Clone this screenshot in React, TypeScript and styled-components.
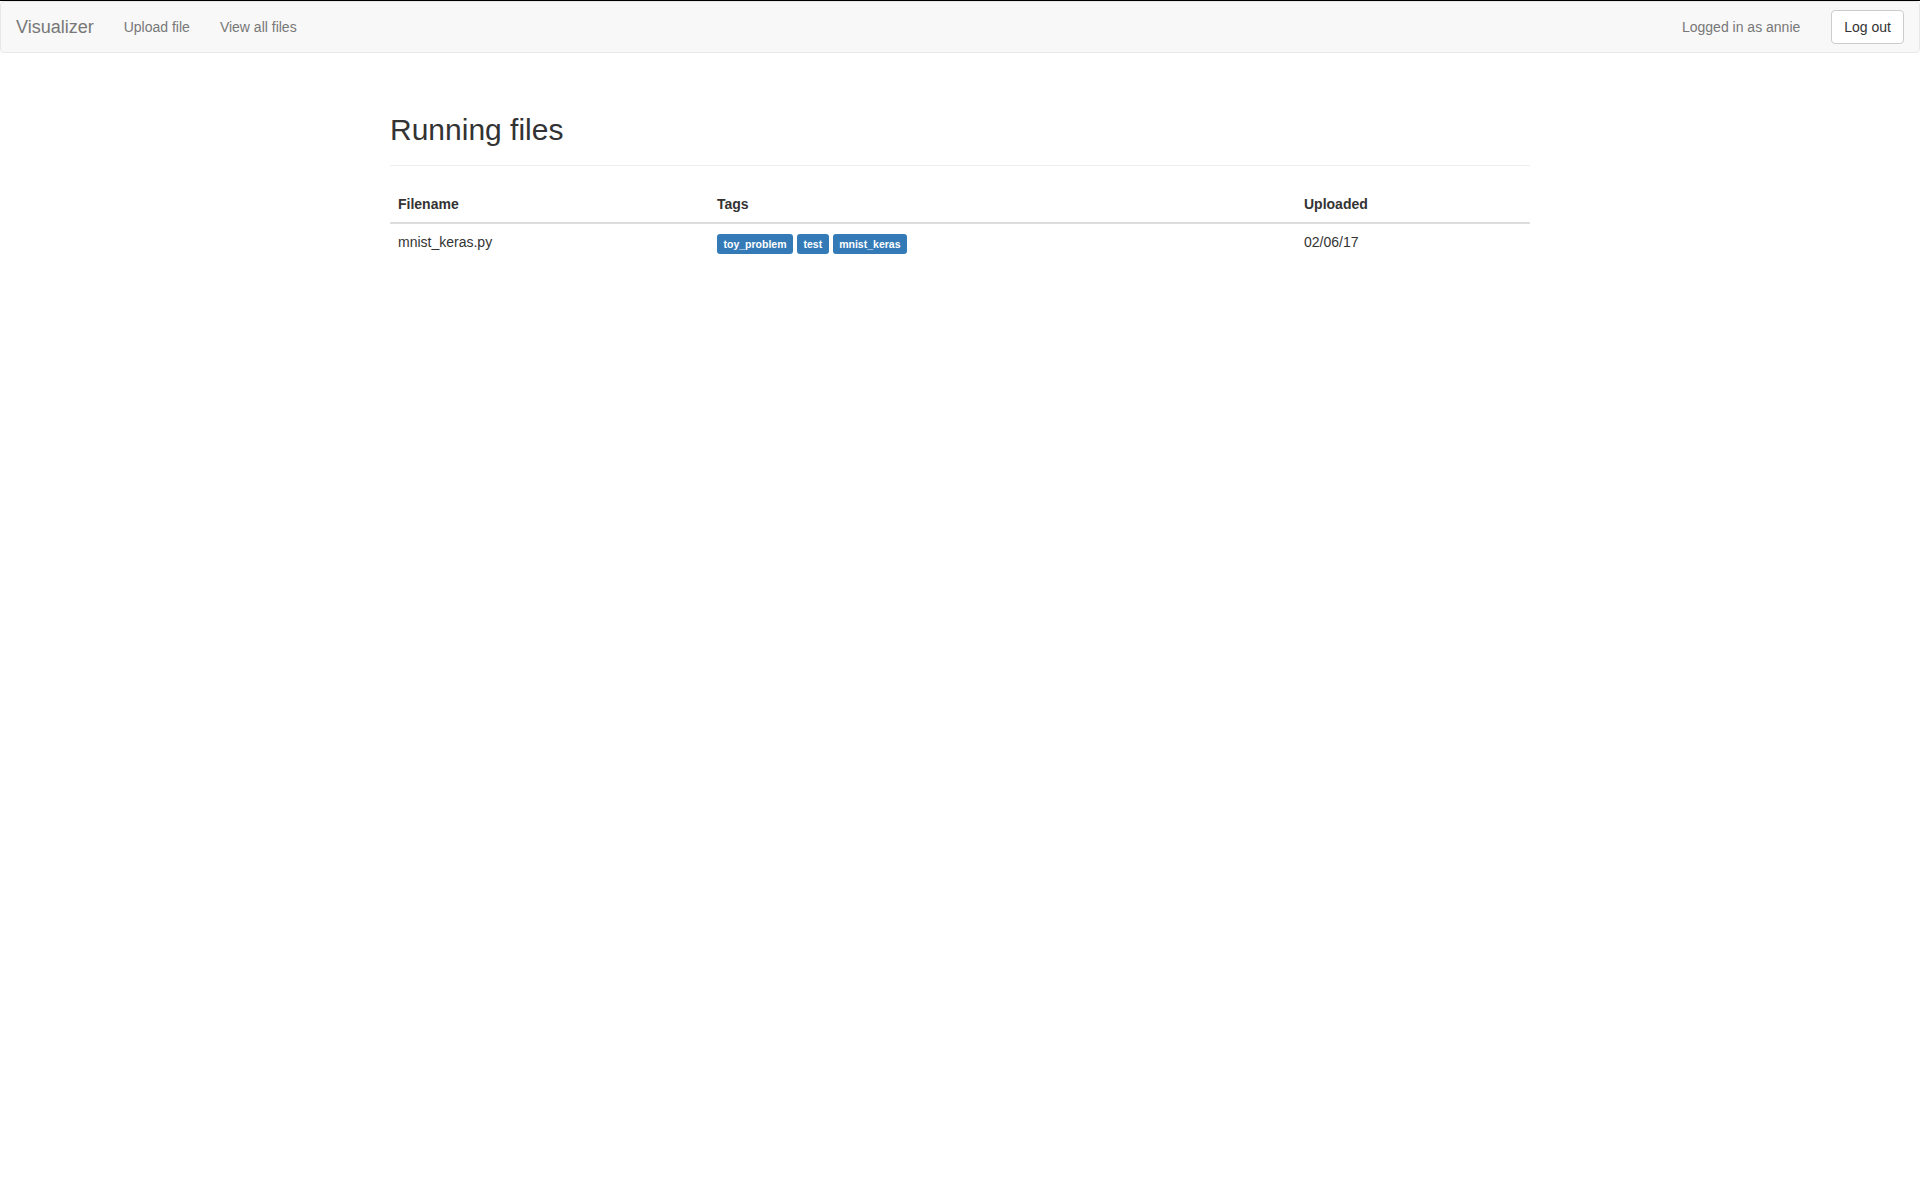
import React from 'react'
import styled, { createGlobalStyle } from 'styled-components'

const GlobalStyle = createGlobalStyle`
  html, body {
    margin: 0;
  }
  body {
    font-family: "Liberation Sans", Helvetica, Arial, sans-serif;
    font-size: 14px;
    line-height: 1.42857143;
    color: #333;
    background: #fff;
    border-top: 1px solid #000;
  }
  * {
    box-sizing: border-box;
  }
`

const Navbar = styled('nav')`
  display: flex;
  justify-content: space-between;
  align-items: flex-start;
  min-height: 52px;
  padding: 0 15px;
  margin-bottom: 20px;
  background-color: #f8f8f8;
  border: 1px solid #e7e7e7;
  border-radius: 4px;
`

const NavGroup = styled('div')`
  display: flex;
  align-items: flex-start;
`

const Brand = styled('a')`
  margin-left: -15px;
  padding: 15px;
  height: 50px;
  font-size: 18px;
  line-height: 20px;
  color: #777;
  text-decoration: none;
`

const NavLink = styled('a')`
  display: block;
  padding: 15px;
  line-height: 20px;
  color: #777;
  text-decoration: none;
`

const NavText = styled('p')`
  margin: 15px 31px 15px 0;
  line-height: 20px;
  color: #777;
`

const LogoutButton = styled('button')`
  margin: 8px 0;
  padding: 6px 12px;
  font-family: inherit;
  font-size: 14px;
  line-height: 20px;
  color: #333;
  background-color: #fff;
  border: 1px solid #ccc;
  border-radius: 4px;
  cursor: pointer;
`

const Container = styled('div')`
  width: 1170px;
  margin: 0 auto;
  padding: 0 15px;
`

const PageHeader = styled('div')`
  margin: 60px 0 20px;
  padding-bottom: 9px;
  border-bottom: 1px solid #eee;
`

const Title = styled('h2')`
  margin: 0 0 10px;
  font-size: 30px;
  font-weight: 500;
  line-height: 1.1;
  color: inherit;
`

const Table = styled('table')`
  width: 100%;
  table-layout: fixed;
  border-collapse: collapse;
  border-spacing: 0;
  margin-bottom: 20px;
`

const HeadCell = styled('th')<{ $width: number }>`
  width: ${(p) => p.$width}px;
  padding: 8px;
  line-height: 20px;
  text-align: left;
  vertical-align: bottom;
  font-weight: bold;
  border-bottom: 2px solid #ddd;
`

const Cell = styled('td')`
  padding: 8px;
  line-height: 20px;
  vertical-align: top;
  border-top: 1px solid #ddd;
`

const TagList = styled('div')`
  display: flex;
  gap: 4px;
  padding-top: 2px;
`

const Tag = styled('span')`
  display: block;
  height: 20px;
  padding: 0 6.5px;
  font-size: 10.5px;
  font-weight: bold;
  line-height: 20px;
  color: #fff;
  background-color: #337ab7;
  border-radius: 3px;
  white-space: nowrap;
`

const files = [
  { name: 'mnist_keras.py', tags: ['toy_problem', 'test', 'mnist_keras'], uploaded: '02/06/17' },
]

function App() {
  return (
    <>
      <GlobalStyle />
      <Navbar>
        <NavGroup>
          <Brand href="#">Visualizer</Brand>
          <NavLink href="#">Upload file</NavLink>
          <NavLink href="#">View all files</NavLink>
        </NavGroup>
        <NavGroup>
          <NavText>Logged in as annie</NavText>
          <LogoutButton type="button">Log out</LogoutButton>
        </NavGroup>
      </Navbar>
      <Container>
        <PageHeader>
          <Title>Running files</Title>
        </PageHeader>
        <Table>
          <thead>
            <tr>
              <HeadCell $width={319}>Filename</HeadCell>
              <HeadCell $width={587}>Tags</HeadCell>
              <HeadCell $width={234}>Uploaded</HeadCell>
            </tr>
          </thead>
          <tbody>
            {files.map((f) => (
              <tr key={f.name}>
                <Cell>{f.name}</Cell>
                <Cell>
                  <TagList>
                    {f.tags.map((t) => (
                      <Tag key={t}>{t}</Tag>
                    ))}
                  </TagList>
                </Cell>
                <Cell>{f.uploaded}</Cell>
              </tr>
            ))}
          </tbody>
        </Table>
      </Container>
    </>
  )
}

export default App
